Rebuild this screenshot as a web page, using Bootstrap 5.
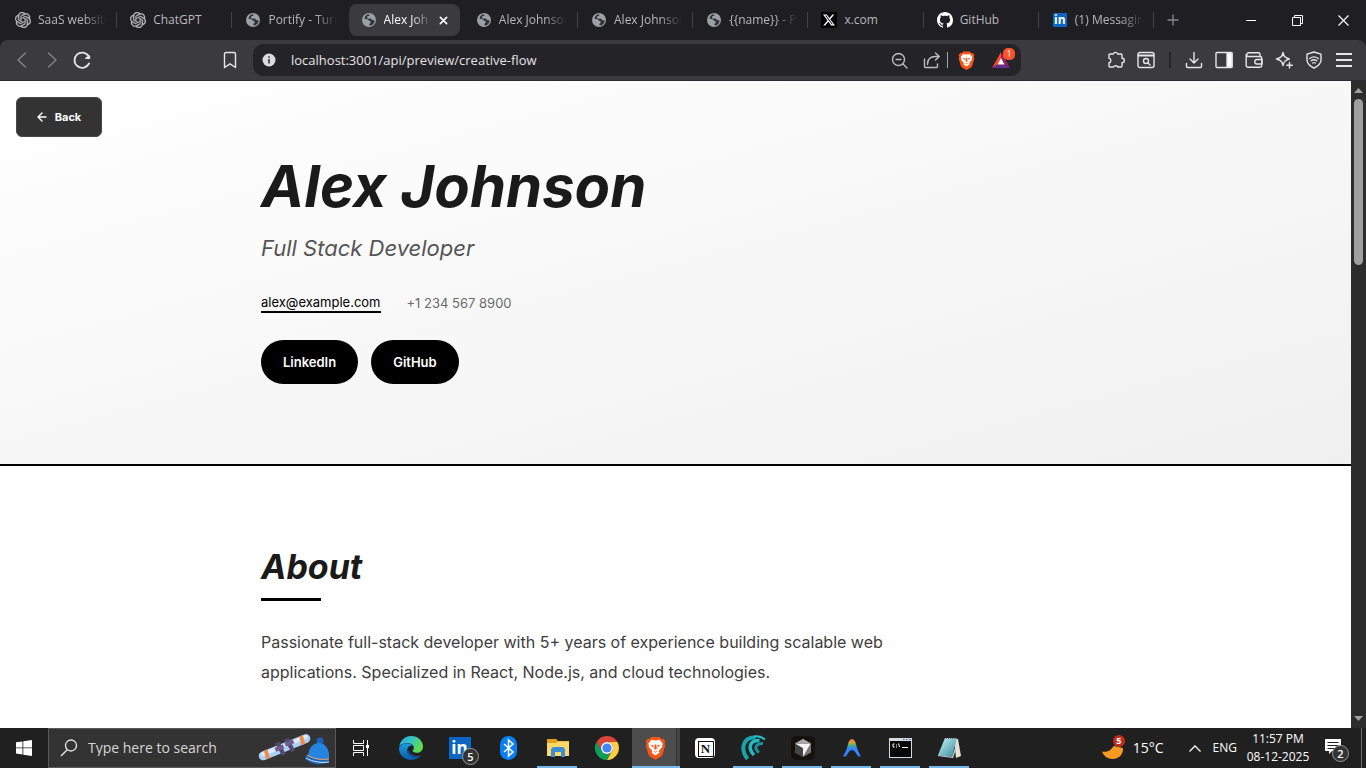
<!DOCTYPE html>
<html lang="en">
<head>
<meta charset="utf-8">
<meta name="viewport" content="width=device-width, initial-scale=1">
<title>Alex Johnson</title>
<link href="https://cdn.jsdelivr.net/npm/bootstrap@5.3.0/dist/css/bootstrap.min.css" rel="stylesheet">
<style>
  body { font-family: "Open Sans", "Noto Sans", sans-serif; font-size: 12px; line-height: 16px; background: #202020; }
  button { background: none; border: 0; padding: 0; color: inherit; font: inherit; }
  svg { display: block; flex: none; }
  .line { fill: none; stroke: currentColor; stroke-width: 1.4; stroke-linecap: round; stroke-linejoin: round; }
  .line.bold { stroke-width: 1.8; }

  /* Tab strip */
  .tabstrip { background: #1f1e23; color: #b9b9bc; height: 40px; padding-left: 2px; }
  .tabs { flex: 1 1 0; min-width: 0; }
  .tab-cell { flex: 1 1 0; min-width: 0; position: relative; }
  .tab-cell.ruled::after { content: ""; position: absolute; right: 0; top: 12px; height: 16px; width: 1px; background: #424146; }
  .tab-btn { height: 32px; margin: 4px 1px; padding: 0 8px 0 12px; gap: 7px; border-radius: 8px; width: calc(100% - 4px); text-align: left; }
  .tab-btn.current { background: #3b3a3f; color: #fff; padding-right: 12px; }
  .tab-text { flex: 1 1 0; min-width: 0; overflow: hidden; white-space: nowrap; }
  .faded { -webkit-mask-image: linear-gradient(90deg, #000 calc(100% - 22px), transparent); mask-image: linear-gradient(90deg, #000 calc(100% - 22px), transparent); }
  .strip-end { flex: 0 0 212px; }
  .new-tab { width: 38px; height: 40px; }
  .win-btn { width: 46px; height: 40px; color: #fff; }
  .in-logo { background: #0a66c2; color: #fff; font: 700 12px/14px "Open Sans", sans-serif; width: 14px; height: 14px; border-radius: 1px; text-align: center; flex: none; margin: 0 1px; }

  /* Toolbar */
  .toolbar-wrap { background: #1f1e23; }
  .toolbar { background: #3b3a3f; color: #e6e6e8; height: 41px; border-radius: 8px 8px 0 0; border-bottom: 1px solid #2b2a2e; padding: 0 7px; }
  .tool { flex: none; width: 30px; height: 32px; display: flex; align-items: center; justify-content: center; }
  .tool.wide { width: 36px; }
  .dim { color: #85848a; }
  .soft { color: #bdbdc1; }
  .bookmark { margin-left: 118px; }
  .omnibox { background: #242328; border-radius: 10px; height: 32px; margin: 0 80px 0 8px; padding: 0 3px 0 8px; }
  .url { background: none; border: 0; outline: 0; color: #e4e4e6; font-size: 13px; padding: 0 0 0 14px; min-width: 0; }
  .hairline { width: 1px; height: 16px; background: #a5a5aa; flex: none; }
  .rule-slot { width: 18px; }
  .vrule { width: 2px; height: 16px; background: #252429; }

  /* Previewed page */
  .viewport-row { min-height: 0; }
  .site { background: #fff; color: #1a1a1a; font-family: Inter, sans-serif; overflow: hidden; position: relative; min-width: 0; }
  .hero { background: linear-gradient(165deg, #ffffff 0%, #f0f0f0 100%); border-bottom: 2px solid #000; padding: 76px 0 80px; }
  .column { max-width: 829px; margin: 0 auto; }
  .person { font-size: 58px; line-height: 58px; font-weight: 700; font-style: italic; margin: 0 0 16px; }
  .role { font-size: 22px; line-height: 34px; font-weight: 400; font-style: italic; color: #555; margin: 0 0 28px; }
  .contacts { font-size: 13px; line-height: 20px; gap: 26px; margin-bottom: 27px; color: #6b6b6b; }
  .contacts a { color: #000; text-decoration: none; border-bottom: 2px solid #000; line-height: 18px; }
  .pills { gap: 13px; }
  .pill { background: #000; color: #fff; border-radius: 40px; font-size: 13px; line-height: 20px; font-weight: 600; padding: 12px 22px; text-decoration: none; }
  .back { position: absolute; left: 16px; top: 16px; height: 40px; width: 86px; background: #333; border: 1px solid #474747; border-radius: 6px; color: #fff; font-size: 11px; font-weight: 700; gap: 8px; }
  .about { padding: 79px 0 0; }
  .about h2 { font-size: 34px; line-height: 44px; font-weight: 700; font-style: italic; margin: 0 0 9px; }
  .bar { width: 60px; height: 3px; background: #000; margin-bottom: 26px; }
  .about p { font-size: 16px; line-height: 30px; color: #3d3d3d; max-width: 640px; margin: 0; }
  .scroller { width: 15px; background: #2c2c2c; color: #9f9f9f; padding: 6px 0; }
  .thumb { width: 9px; height: 166px; border-radius: 5px; background: #9f9f9f; margin-top: 5px; }

  /* Taskbar */
  .taskbar { background: #202020; color: #fff; height: 40px; }
  .start { width: 48px; height: 40px; }
  .search { width: 288px; height: 40px; background: #333; border: 1px solid #5a5a5a; padding: 0 3px 0 11px; }
  .search input { background: none; border: 0; outline: 0; color: #d6d6d6; font-size: 14px; padding: 0; flex: 1 1 0; min-width: 0; margin-left: 10px; }
  .search input::placeholder { color: #d6d6d6; opacity: 1; }
  .apps { padding-left: 1px; }
  .app { width: 49px; height: 40px; display: flex; align-items: center; justify-content: center; position: relative; }
  .app.open::after { content: ""; position: absolute; left: 4px; right: 5px; bottom: 0; height: 2px; background: #76b9ed; }
  .app.focus { background: linear-gradient(90deg, transparent 1px, #4d4d4d 1px 45px, #333 45px 46px, #434343 46px); }
  .app.focus::after { left: 1px; right: 0; }
  .in-app { background: #0a66c2; font: 700 17px/21px "Open Sans", sans-serif; width: 22px; height: 22px; }
  .count { position: absolute; left: 27px; top: 20px; width: 17px; height: 17px; border-radius: 50%; background: #333; border: 1px solid #999; font-size: 11px; line-height: 15px; font-weight: 600; text-align: center; }
  .notion { width: 16px; height: 16px; border: 1px solid #111; background: #fff; color: #111; font: 700 13px/14px "Liberation Serif", serif; }
  .notion-box { width: 20px; height: 20px; padding: 3px 0 0 3px; background: #fff; border-radius: 4px; }
  .cursor { width: 24px; height: 24px; background: #14120b; border-radius: 5px; }
  .weather { position: relative; width: 24px; height: 24px; }
  .weather b { position: absolute; left: 12px; top: -1px; width: 12px; height: 12px; border-radius: 50%; background: #c42b1c; font-size: 9px; line-height: 12px; text-align: center; }
  .degrees { font-size: 14px; margin: 0 25px 0 8px; }
  .lang { margin: 0 8px 0 12px; }
  .tray { padding-right: 4px; }
  .clock { width: 66px; line-height: 18px; text-align: center; white-space: nowrap; margin-right: 14px; }
  .note { position: relative; width: 26px; height: 28px; padding-top: 5px; }
  .note .count { left: 7px; top: 11px; }
  .edge-line { width: 1px; height: 40px; background: #6e6e6e; margin-left: 10px; }
  .bat { flex: none; position: relative; width: 34px; height: 32px; display: flex; align-items: center; justify-content: center; }
  .bat b { position: absolute; left: 19px; top: 4px; width: 12px; height: 12px; border-radius: 5px; background: #fb542b; color: #fff; font-size: 9px; line-height: 12px; text-align: center; font-weight: 400; }
</style>
</head>
<body>
<svg width="0" height="0" class="position-absolute" aria-hidden="true">
  <symbol id="openai" viewBox="0 0 24 24"><path fill="currentColor" stroke="currentColor" stroke-width=".5" d="M22.2819 9.8211a5.9847 5.9847 0 0 0-.5157-4.9108 6.0462 6.0462 0 0 0-6.5098-2.9A6.0651 6.0651 0 0 0 4.9807 4.1818a5.9847 5.9847 0 0 0-3.9977 2.9 6.0462 6.0462 0 0 0 .7427 7.0966 5.98 5.98 0 0 0 .511 4.9107 6.051 6.051 0 0 0 6.5146 2.9001A5.9847 5.9847 0 0 0 13.2599 24a6.0557 6.0557 0 0 0 5.7718-4.2058 5.9894 5.9894 0 0 0 3.9977-2.9001 6.0557 6.0557 0 0 0-.7475-7.0729zm-9.022 12.6081a4.4755 4.4755 0 0 1-2.8764-1.0408l.1419-.0804 4.7783-2.7582a.7948.7948 0 0 0 .3927-.6813v-6.7369l2.02 1.1686a.071.071 0 0 1 .038.052v5.5826a4.504 4.504 0 0 1-4.4945 4.4944zm-9.6607-4.1254a4.4708 4.4708 0 0 1-.5346-3.0137l.142.0852 4.783 2.7582a.7712.7712 0 0 0 .7806 0l5.8428-3.3685v2.3324a.0804.0804 0 0 1-.0332.0615L9.74 19.9502a4.4992 4.4992 0 0 1-6.1408-1.6464zM2.3408 7.8956a4.485 4.485 0 0 1 2.3655-1.9728V11.6a.7664.7664 0 0 0 .3879.6765l5.8144 3.3543-2.0201 1.1685a.0757.0757 0 0 1-.071 0l-4.8303-2.7865A4.504 4.504 0 0 1 2.3408 7.872zm16.5963 3.8558L13.1038 8.364 15.1192 7.2a.0757.0757 0 0 1 .071 0l4.8303 2.7913a4.4944 4.4944 0 0 1-.6765 8.1042v-5.6772a.79.79 0 0 0-.407-.667zm2.0107-3.0231l-.142-.0852-4.7735-2.7818a.7759.7759 0 0 0-.7854 0L9.409 9.2297V6.8974a.0662.0662 0 0 1 .0284-.0615l4.8303-2.7866a4.4992 4.4992 0 0 1 6.6802 4.66zM8.3065 12.863l-2.02-1.1638a.0804.0804 0 0 1-.038-.0567V6.0742a4.4992 4.4992 0 0 1 7.3757-3.4537l-.142.0805L8.704 5.459a.7948.7948 0 0 0-.3927.6813zm1.0976-2.3654l2.602-1.4998 2.6069 1.4998v2.9994l-2.5974 1.4997-2.6067-1.4997Z"/></symbol>
  <symbol id="globe" viewBox="0 0 16 16"><circle cx="8" cy="8" r="7" fill="#9aa0a6"/><path fill="#1f1e23" d="M8.700 2.400 7.900 4l-1.700.300-.2 1.900 1.700.5 2.300-.1 1 1.300 2.700.5c-.3 3-2.300 5-5 5.100l-.4-1.500L9.500 11l.3-1.600-1.600-.6-1.200-1.400-3.700-1 .6-.8.2-1.200 2-1.800z" opacity=".85"/></symbol>
  <symbol id="lion" viewBox="0 0 18 20"><path fill="#fb5415" d="M5.500.5h7l1.600 1.700 1.500-.2 1.800 2.300-.7 1.700.6 1.900-2.300 7.900-1.600 1.800L9 20l-4.400-2.400L3 15.800.7 7.900l.6-1.900-.7-1.700L2.400 2l1.500.2z"/><path fill="#fff" d="M9 3.600 12.600 3l2.600 3.300-.6 1.500.2 1.300-3 3.500.6 1.400L9 16.400 5.600 14l.6-1.400-3-3.500.2-1.300-.6-1.500L5.400 3z"/><path fill="#fb5415" d="m4.600 7 3 .8-.5 1.700zM13.400 7l-3 .8.5 1.700zM8.300 7h1.400l.4 3.800L9 11.600l-1.100-.8zM6.800 12.300l2.200.9 2.200-.9L9 14z"/></symbol>
</svg>

<div class="vh-100 d-flex flex-column overflow-hidden">
  <header class="flex-shrink-0">
    <div class="tabstrip d-flex">
      <div class="tabs d-flex" role="tablist">
        <div class="tab-cell ruled"><button class="tab-btn d-flex align-items-center" role="tab"><svg width="16" height="16"><use href="#openai"/></svg><span class="tab-text faded">SaaS website</span></button></div>
        <div class="tab-cell ruled"><button class="tab-btn d-flex align-items-center" role="tab"><svg width="16" height="16"><use href="#openai"/></svg><span class="tab-text">ChatGPT</span></button></div>
        <div class="tab-cell"><button class="tab-btn d-flex align-items-center" role="tab"><svg width="16" height="16"><use href="#globe"/></svg><span class="tab-text faded">Portify - Turn</span></button></div>
        <div class="tab-cell"><button class="tab-btn current d-flex align-items-center" role="tab" aria-selected="true"><svg width="16" height="16"><use href="#globe"/></svg><span class="tab-text faded">Alex Joh</span><svg width="9" height="9" viewBox="0 0 10 10" class="line bold"><path d="m1.500 1.500 7 7m0-7-7 7"/></svg></button></div>
        <div class="tab-cell ruled"><button class="tab-btn d-flex align-items-center" role="tab"><svg width="16" height="16"><use href="#globe"/></svg><span class="tab-text faded">Alex Johnson</span></button></div>
        <div class="tab-cell ruled"><button class="tab-btn d-flex align-items-center" role="tab"><svg width="16" height="16"><use href="#globe"/></svg><span class="tab-text faded">Alex Johnson</span></button></div>
        <div class="tab-cell ruled"><button class="tab-btn d-flex align-items-center" role="tab"><svg width="16" height="16"><use href="#globe"/></svg><span class="tab-text faded">{{name}} - Po</span></button></div>
        <div class="tab-cell ruled"><button class="tab-btn d-flex align-items-center" role="tab"><svg width="16" height="16" viewBox="0 0 32 32"><path d="M0 0h32v32H0z"/><path transform="translate(4 4)" fill="#fff" d="M18.901 1.153h3.680l-8.040 9.190L24 22.846h-7.406l-5.800-7.584-6.638 7.584H.474l8.600-9.830L0 1.154h7.594l5.243 6.932ZM17.610 20.644h2.039L6.486 3.240H4.298Z"/></svg><span class="tab-text">x.com</span></button></div>
        <div class="tab-cell ruled"><button class="tab-btn d-flex align-items-center" role="tab"><svg width="16" height="16" viewBox="0 0 16 16"><path fill="#fff" d="M8 0C3.580 0 0 3.580 0 8c0 3.540 2.290 6.530 5.470 7.590.4.070.55-.17.55-.38 0-.19-.01-.82-.01-1.490-2.010.37-2.530-.49-2.690-.94-.09-.23-.48-.94-.82-1.130-.28-.15-.68-.52-.01-.53.63-.01 1.080.58 1.230.82.72 1.210 1.870.87 2.330.66.070-.52.28-.87.51-1.070-1.780-.2-3.640-.89-3.640-3.950 0-.87.31-1.590.82-2.150-.08-.2-.36-1.020.08-2.120 0 0 .67-.21 2.200.82.64-.18 1.320-.27 2-.27s1.360.09 2 .27c1.530-1.040 2.200-.82 2.200-.82.44 1.100.16 1.920.08 2.120.51.56.82 1.270.82 2.150 0 3.070-1.870 3.750-3.650 3.950.29.25.54.73.54 1.480 0 1.070-.01 1.930-.01 2.200 0 .21.15.46.55.38A8.010 8.010 0 0 0 16 8c0-4.420-3.580-8-8-8z"/></svg><span class="tab-text">GitHub</span></button></div>
        <div class="tab-cell ruled"><button class="tab-btn d-flex align-items-center" role="tab"><span class="in-logo">in</span><span class="tab-text faded">(1) Messagin</span></button></div>
      </div>
      <div class="strip-end d-flex justify-content-between">
        <button class="new-tab dim d-flex align-items-center justify-content-center" aria-label="New tab"><svg width="12" height="12" viewBox="0 0 12 12" class="line"><path d="M6 1v10M1 6h10"/></svg></button>
        <div class="d-flex">
          <button class="win-btn d-flex align-items-center justify-content-center" aria-label="Minimize"><svg width="10" height="10" viewBox="0 0 10 10"><path d="M0 5h10v1H0z" fill="#fff"/></svg></button>
          <button class="win-btn d-flex align-items-center justify-content-center" aria-label="Restore"><svg width="11" height="11" viewBox="0 0 11 11" fill="none" stroke="#fff"><path d="M.5 2.500h8v8h-8zM2.500 2.500v-2h8v8h-2"/></svg></button>
          <button class="win-btn d-flex align-items-center justify-content-center" aria-label="Close"><svg width="11" height="11" viewBox="0 0 11 11" stroke="#fff" stroke-width="1.200"><path d="m.5.5 10 10m0-10-10 10"/></svg></button>
        </div>
      </div>
    </div>

    <div class="toolbar-wrap">
      <nav class="toolbar d-flex align-items-center" aria-label="Browser toolbar">
        <button class="tool dim" aria-label="Back"><svg width="18" height="18" viewBox="0 0 18 18" class="line"><path d="M12.500 2 5 9l7.500 7"/></svg></button>
        <button class="tool dim" aria-label="Forward"><svg width="18" height="18" viewBox="0 0 18 18" class="line"><path d="M5.500 2 13 9l-7.500 7"/></svg></button>
        <button class="tool" aria-label="Reload"><svg width="18" height="18" viewBox="0 0 18 18" class="line bold"><path d="M16 12.500A7.600 7.600 0 1 1 15.500 5"/><path d="M16.300 5.200v2h-3.200z" fill="currentColor"/></svg></button>
        <button class="tool bookmark" aria-label="Bookmark"><svg width="18" height="18" viewBox="0 0 18 18" class="line"><path d="M3.500 3c0-1 .5-1.500 1.500-1.500h8c1 0 1.500.5 1.500 1.500v13.500L9 12.800l-5.500 3.700z"/></svg></button>
        <div class="omnibox d-flex align-items-center flex-grow-1">
          <svg width="16" height="16" viewBox="0 0 16 16"><circle cx="8" cy="8" r="6.500" fill="#dcdce0"/><path d="M7.200 7h1.600v4.500H7.200zM7.200 4.200h1.600v1.600H7.200z" fill="#333"/></svg>
          <input class="url flex-grow-1" type="text" aria-label="Address" value="localhost:3001/api/preview/creative-flow">
          <button class="tool wide soft" aria-label="Zoom"><svg width="17" height="17" viewBox="0 0 17 17" class="line"><circle cx="7.500" cy="7.500" r="6"/><path d="m12 12 4 4M5 7.500h5"/></svg></button>
          <button class="tool soft" aria-label="Share"><svg width="18" height="18" viewBox="0 0 18 18" class="line"><path d="M1.500 8v7.500c0 .6.4 1 1 1h11c.6 0 1-.4 1-1V13M4.500 13.500c0-5 3-8 8-8h3.500M12.500 2l3.800 3.500-3.800 3.500"/></svg></button>
          <span class="hairline"></span>
          <button class="tool wide" aria-label="Shields"><svg width="17" height="19"><use href="#lion"/></svg></button>
          <button class="bat" aria-label="Rewards"><svg width="18" height="16" viewBox="0 0 18 16"><path fill="#ff4724" d="M9 0 0 16l5.500-3.500L9 6z"/><path fill="#9e1f63" d="m9 0 9 16-5.500-3.500L9 6z"/><path fill="#662d91" d="m0 16 5.500-3.500h7L18 16z"/><path fill="#fff" d="m9 6 3.500 6.500h-7z"/></svg><b>1</b></button>
        </div>
        <button class="tool" aria-label="Extensions"><svg width="18" height="18" viewBox="0 0 18 18" class="line"><path d="M2 4c0-.6.4-1 1-1h3.300a2.300 2.300 0 0 1 4.400 0H14c.6 0 1 .4 1 1v3.200a2.300 2.300 0 0 1 0 4.600V15c0 .6-.4 1-1 1h-3.200c-.3-1.600-3.700-1.600-4.300 0H3c-.6 0-1-.4-1-1v-3.200c2.500-.3 2.500-4.300 0-4.600z"/></svg></button>
        <button class="tool" aria-label="Search tabs"><svg width="18" height="18" viewBox="0 0 18 18" class="line"><rect x="1" y="1.500" width="16" height="15" rx="2"/><path d="M1.500 4.500h15" stroke-width="2"/><circle cx="9" cy="10" r="2.500"/><path d="m11 12 2 2"/></svg></button>
        <span class="rule-slot d-flex justify-content-center"><span class="vrule"></span></span>
        <button class="tool" aria-label="Downloads"><svg width="18" height="18" viewBox="0 0 18 18" class="line"><path d="M9 1.500v10M5 8l4 4 4-4M1.500 12.500v3c0 .6.4 1 1 1h13c.6 0 1-.4 1-1v-3"/></svg></button>
        <button class="tool" aria-label="Sidebar"><svg width="18" height="18" viewBox="0 0 18 18" class="line"><rect x="1" y="1.500" width="16" height="15" rx="1"/><path d="M12 2h5v14h-5z" fill="#fff"/></svg></button>
        <button class="tool" aria-label="Wallet"><svg width="18" height="18" viewBox="0 0 18 18" class="line"><path d="M15 5.500V3.300c0-.9-.6-1.500-1.500-1.500H3a2 2 0 0 0 0 3.700h12c1 0 1.700.6 1.700 1.500v7.500c0 1-.6 1.700-1.700 1.700H3c-1 0-1.800-.6-1.800-1.700V3.500"/><path d="M17 8.500h-5a2.200 2.200 0 0 0 0 4.500h5z"/></svg></button>
        <button class="tool" aria-label="Leo AI"><svg width="18" height="18" viewBox="0 0 18 18" class="line"><path d="M8 1.500c.8 4 2 5.300 6.300 6.500C10 9.200 8.800 10.700 8 14.500 7.200 10.700 6 9.200 1.500 8 6 6.800 7.200 5.500 8 1.500zM14.500 11.500v5.500M11.800 14.200h5.500"/></svg></button>
        <button class="tool" aria-label="VPN"><svg width="18" height="18" viewBox="0 0 18 18" class="line"><path d="m9 1 7 2.200v6c0 3.500-3.500 6-7 8-3.500-2-7-4.500-7-8v-6zM4.800 7.500c2.500-1.900 5.900-1.900 8.400 0M6.200 9.700c1.700-1.200 3.900-1.200 5.600 0M7.700 12c.8-.5 1.800-.5 2.600 0"/></svg></button>
        <button class="tool" aria-label="Menu"><svg width="16" height="16" viewBox="0 0 16 16" fill="currentColor"><path d="M0 1h16v2H0zM0 7h16v2H0zM0 13h16v2H0z"/></svg></button>
      </nav>
    </div>
  </header>

  <div class="viewport-row d-flex flex-grow-1">
    <main class="site flex-grow-1">
      <section class="hero">
        <div class="column">
          <h1 class="person">Alex Johnson</h1>
          <p class="role">Full Stack Developer</p>
          <div class="contacts d-flex"><a href="mailto:alex@example.com">alex@example.com</a><span>+1 234 567 8900</span></div>
          <div class="pills d-flex"><a class="pill" href="#linkedin">LinkedIn</a><a class="pill" href="#github">GitHub</a></div>
        </div>
      </section>
      <section class="about">
        <div class="column">
          <h2>About</h2>
          <div class="bar"></div>
          <p>Passionate full-stack developer with 5+ years of experience building scalable web applications. Specialized in React, Node.js, and cloud technologies.</p>
        </div>
      </section>
      <button class="back d-flex align-items-center justify-content-center"><svg width="10" height="10" viewBox="0 0 10 10" class="line"><path d="M9 5H1m4-4L1 5l4 4"/></svg>Back</button>
    </main>
    <div class="scroller d-flex flex-column align-items-center flex-shrink-0" aria-hidden="true">
      <svg width="9" height="7" viewBox="0 0 9 7"><path d="M4.500 1 9 6H0z" fill="currentColor"/></svg>
      <div class="thumb"></div>
      <svg class="mt-auto" width="9" height="7" viewBox="0 0 9 7"><path d="M4.500 6 9 1H0z" fill="currentColor"/></svg>
    </div>
  </div>

  <footer class="taskbar d-flex align-items-center flex-shrink-0">
    <button class="start d-flex align-items-center justify-content-center" aria-label="Start"><svg width="16" height="16" viewBox="0 0 16 16" fill="#fff"><path d="m0 2.300 6.500-.9v6.100H0zM7.300 1.300 16 0v7.500H7.300zM0 8.300h6.500v6.200L0 13.600zM7.300 8.300H16V16l-8.700-1.300z"/></svg></button>
    <label class="search d-flex align-items-center">
      <svg width="18" height="18" viewBox="0 0 18 18" fill="none" stroke="#e8e8e8" stroke-width="1.300"><circle cx="11" cy="6.500" r="5.500"/><path d="M7.200 10.700 1 17"/></svg>
      <input type="text" placeholder="Type here to search" aria-label="Type here to search">
      <svg width="76" height="36" viewBox="0 0 76 36">
        <g transform="translate(2 1) rotate(-22 27 16)"><rect x="-1" y="11.500" width="55" height="9" rx="4.500" fill="#a9d0f5"/><rect x="2" y="12.500" width="50" height="4" rx="2" fill="#dcecff"/><path d="M6 11.500h4l-1 9H5zM44 11.500h4l-1 9h-4z" fill="#f08a4b"/><path d="M19 9h5l1 14h-4zM29 9h5l1 14h-4z" fill="#574774"/><path d="M17 13h9v4h-9zM28 12h9v4h-9z" fill="#6f5d8b"/></g>
        <circle cx="64" cy="11" r="3.500" fill="#1765bd"/><path d="M52 28c0-10 5-15 11-15s11 6 10 16c-5 5-15 5-21-1z" fill="#2584e0"/><path d="M50 25c7 5 15 6 23 4v3c-8 4-17 3-24-3z" fill="#1a63b8"/><path d="M51 25c7 4 14 5 22 4" fill="none" stroke="#f3a55b"/><path d="M50 28c7 4 15 5 23 4" fill="none" stroke="#dfe9f7"/>
      </svg>
    </label>
    <div class="apps d-flex">
      <button class="app" aria-label="Task View"><svg width="17" height="16" viewBox="0 0 17 16" fill="none" stroke="#fff"><path d="M.5 0v3.500h10V0M.5 5.500h10v5H.5zM.5 16v-3.500h10V16M14.500 0v16"/><path d="M13 5h3v3h-3z" fill="#fff" stroke="none"/></svg></button>
      <button class="app" aria-label="Edge"><svg width="24" height="24" viewBox="0 0 24 24"><defs><linearGradient id="e1" x1="0" x2="1" y2=".4"><stop stop-color="#2aa8e0"/><stop offset=".5" stop-color="#35c1c8"/><stop offset="1" stop-color="#62dc4d"/></linearGradient><linearGradient id="e2" x2="0" y2="1"><stop stop-color="#1b9de2"/><stop offset="1" stop-color="#0b5ca8"/></linearGradient></defs><path fill="url(#e1)" d="M.3 10.500C1.200 4.500 6 0 12.200 0 19 0 24 5 24 10.500c0 4-2.800 6.300-6.200 6.300-3 0-4.500-1.300-4.200-2.200.8-1 1.200-1.600 1.200-2.900 0-2.500-2.600-4.700-6.500-4.700-3.500 0-6.400 1.500-8 3.500z"/><path fill="url(#e2)" d="M.1 11.500C1.500 8.700 5 7.200 8.300 7.200c2.500 0 4.500 1 5.500 2.300-3.500-.7-5.600 2-5.600 5 0 4 4 6.500 8 6.500 2.200 0 4-.6 5.300-1.400C19.300 22.500 16 24 12.300 24 5 24-.5 18.500.1 11.500z"/><path fill="#124b8f" d="M8.500 12.500c-1 5.500 3 9.500 9 9.200 2-.2 3.500-1 4.800-2.700-6 2.700-12-.5-13.800-6.500z"/></svg></button>
      <button class="app" aria-label="LinkedIn"><span class="in-app">in</span><span class="count">5</span></button>
      <button class="app" aria-label="Bluetooth"><svg width="17" height="24" viewBox="0 0 17 24"><rect width="17" height="24" rx="8.500" fill="#0a7ff5"/><path d="m4 8 9 8-4.500 4V4L13 8l-9 8" fill="none" stroke="#fff" stroke-width="1.500"/></svg></button>
      <button class="app open" aria-label="File Explorer"><svg width="22" height="20" viewBox="0 0 22 20"><path fill="#e2a01b" d="M0 1h9l2 2h11v5H0z"/><path fill="#ffd869" d="M0 5h9l1.500-1.500H22V18H0z"/><path fill="#3d8ed4" d="M4 19v-8l2-2h10l2 2v8h-4v-5H8v5z"/></svg></button>
      <button class="app" aria-label="Chrome"><svg width="24" height="24" viewBox="0 0 24 24"><path fill="#db4437" d="M1.600 6A12 12 0 0 1 22.390 6H12a6 6 0 0 0-5.200 9z"/><path fill="#0f9d58" d="M1.600 6A12 12 0 0 0 12 24l5.200-9a6 6 0 0 1-10.400 0z"/><path fill="#ffcd40" d="M22.390 6A12 12 0 0 1 12 24l5.200-9A6 6 0 0 0 12 6z"/><circle cx="12" cy="12" r="6" fill="#fff"/><circle cx="12" cy="12" r="4.600" fill="#4285f4"/></svg></button>
      <button class="app open focus" aria-label="Brave"><svg width="21" height="24"><use href="#lion"/></svg></button>
      <button class="app" aria-label="Notion"><span class="notion-box"><span class="notion d-block">N</span></span></button>
      <button class="app open" aria-label="Wave"><svg width="26" height="26" viewBox="0 0 26 26" fill="none"><path d="M6.500 24C-.5 15 1 2 14.500 2.500" stroke="#19a5ae" stroke-width="4"/><path d="M13 20C6 13 9 5 18.500 5.500" stroke="#20bac2" stroke-width="3.500"/><path d="M18 17.500C12.500 13 15 8 22 8.500" stroke="#18929d" stroke-width="3"/><path d="M13 1.500c5-.8 8 .5 11 3" stroke="#26c0c8" stroke-width="2"/></svg></button>
      <button class="app open" aria-label="Cursor"><span class="cursor d-flex align-items-center justify-content-center"><svg width="16" height="18" viewBox="0 0 16 18"><path fill="#777" d="m8 0 8 4.500v9L8 18l-8-4.500v-9z"/><path fill="#444" d="m0 4.500 8 4.500v9l-8-4.500z"/><path fill="#f3f3f3" d="M.5 4.800h15L8 17.500V9z"/><path fill="#aaa" d="m8 0 8 4.500H0z"/></svg></span></button>
      <button class="app open" aria-label="Antigravity"><svg width="18" height="18" viewBox="0 0 18 18"><defs><linearGradient id="ag" x2="0" y2="1"><stop stop-color="#f5643c"/><stop offset=".2" stop-color="#d8a53a"/><stop offset=".35" stop-color="#4fae7d"/><stop offset=".55" stop-color="#3186ff"/></linearGradient></defs><path fill="url(#ag)" d="M9 0c2.500 0 3.400 3 4.200 6 1 4 2.300 7.500 4.500 11-.8.9-2 .8-3-.3C12.800 14 11.500 11 9 11s-3.800 3-5.700 5.700c-1 1.100-2.200 1.200-3 .3C2.500 13.500 3.800 10 4.800 6 5.600 3 6.500 0 9 0z"/></svg></button>
      <button class="app open" aria-label="Command Prompt"><svg width="23" height="20" viewBox="0 0 23 20"><path fill="#d5dbe0" d="M0 0h23v20H0z"/><path fill="#080808" d="M1 3h21v16H1z"/><path d="M14 1.500h1.500m1.500 0h1.500m1.500 0h1.500" stroke="#2b73b7"/><path d="M5.500 6H4v3h1.500M7 7h1m-1 2h1m1.500-3.500 1 3.500M13 9.500h6" stroke="#fff" fill="none"/></svg></button>
      <button class="app open" aria-label="Notepad"><svg width="23" height="22" viewBox="0 0 23 22"><defs><linearGradient id="np" x2="1" y2="1"><stop stop-color="#d7f4f5"/><stop offset=".5" stop-color="#7cbfcb"/><stop offset="1" stop-color="#378397"/></linearGradient></defs><path fill="#e6e1d2" d="M16 2h4l3 17-5 2z"/><path fill="url(#np)" d="M7 1h12l-5 19-14-2z"/><path fill="#cfd9dd" d="m0 18 14 2 5-15 1 1-5 15-15-2z"/><path d="M8 1.500h11" stroke="#666" stroke-dasharray="1 1"/></svg></button>
    </div>
    <div class="tray d-flex align-items-center ms-auto align-self-stretch">
      <div class="weather"><svg width="24" height="24" viewBox="0 0 24 24"><path fill="#f59a23" d="M1 15.500c4 1 9-.5 11.500-5.500l9.500 2c.3 7-4.500 11-10.500 11-5 0-9-3-10.500-7.500z"/></svg><b>5</b></div>
      <span class="degrees">15°C</span>
      <svg width="12" height="7" viewBox="0 0 12 7" fill="none" stroke="#fff" stroke-width="1.300"><path d="m.5 6.500 5.500-5.500 5.500 5.500"/></svg>
      <span class="lang">ENG</span>
      <div class="clock">11:57 PM<br>08-12-2025</div>
      <div class="note"><svg width="16" height="16" viewBox="0 0 16 16"><path fill="#fff" d="M0 0h16v12H7l-3 3v-3H0z"/><path d="M2.500 3.500h11m-11 3h11m-11 3h7" stroke="#222"/></svg><span class="count">2</span></div>
      <span class="edge-line"></span>
    </div>
  </footer>
</div>
<script src="https://cdn.jsdelivr.net/npm/bootstrap@5.3.0/dist/js/bootstrap.bundle.min.js"></script>
</body>
</html>
